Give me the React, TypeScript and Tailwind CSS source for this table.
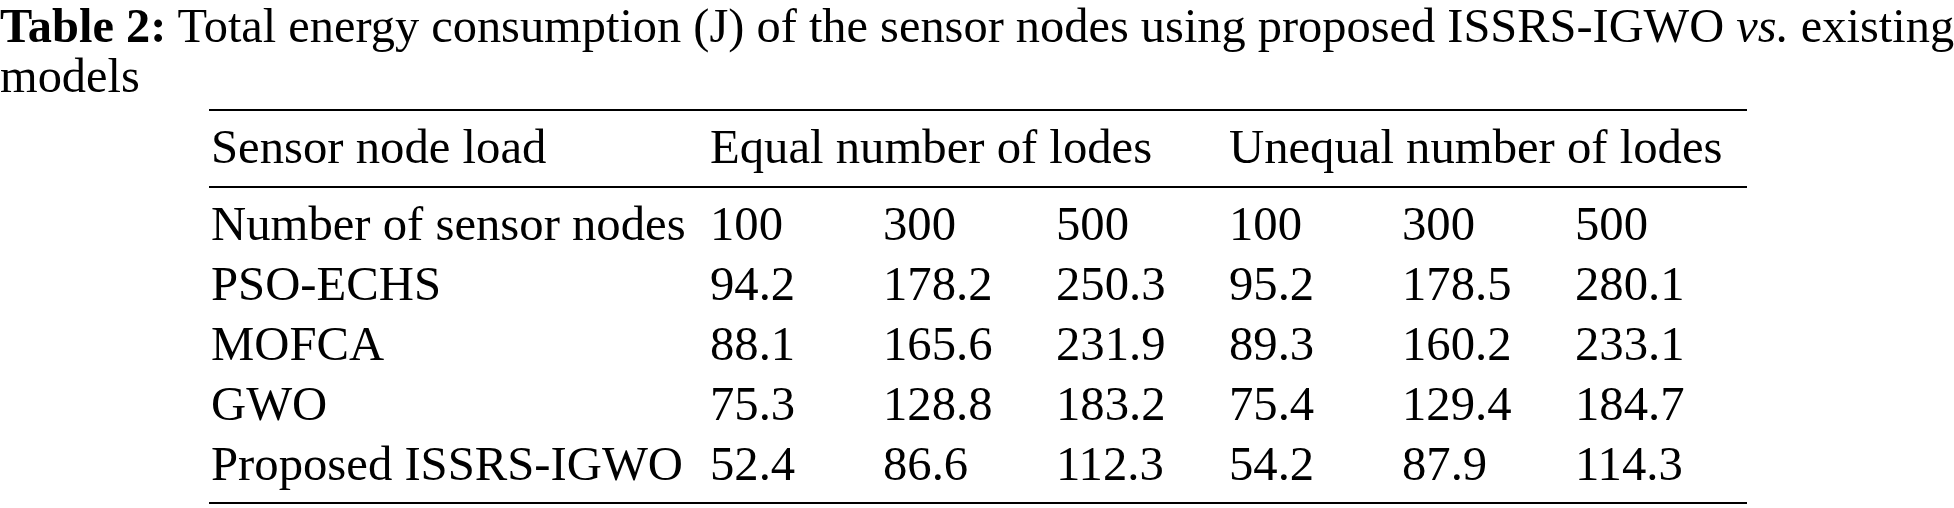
import React from 'react';

const rows: [string, string[]][] = [
  ['Number of sensor nodes', ['100', '300', '500', '100', '300', '500']],
  ['PSO-ECHS', ['94.2', '178.2', '250.3', '95.2', '178.5', '280.1']],
  ['MOFCA', ['88.1', '165.6', '231.9', '89.3', '160.2', '233.1']],
  ['GWO', ['75.3', '128.8', '183.2', '75.4', '129.4', '184.7']],
  ['Proposed ISSRS-IGWO', ['52.4', '86.6', '112.3', '54.2', '87.9', '114.3']],
];

const App = () => {
  return (
    <div className="w-[1954px] h-[508px] bg-white text-black overflow-hidden font-['Liberation_Serif','Times_New_Roman',serif]">
      {/* Caption */}
      <div className="text-[48.4px] leading-[50px] pt-[1px]">
        <p className="whitespace-nowrap">
          <span className="font-bold">Table 2:</span> Total energy consumption (J) of the sensor nodes using proposed ISSRS-IGWO <i>vs.</i> existing
        </p>
        <p>models</p>
      </div>

      {/* Table */}
      <table className="ml-[209px] mt-[8px] table-fixed border-collapse text-[48.7px] leading-[60px]">
        <colgroup>
          <col className="w-[500px]" />
          <col className="w-[173px]" />
          <col className="w-[173px]" />
          <col className="w-[173px]" />
          <col className="w-[173px]" />
          <col className="w-[173px]" />
          <col className="w-[173px]" />
        </colgroup>
        <thead>
          <tr className="border-t-2 border-b-2 border-black">
            <th className="pl-[2px] pt-[6px] pb-[9px] text-left font-normal whitespace-nowrap">Sensor node load</th>
            <th colSpan={3} className="pl-[1px] pt-[6px] pb-[9px] text-left font-normal whitespace-nowrap">Equal number of lodes</th>
            <th colSpan={3} className="pl-[1px] pt-[6px] pb-[9px] text-left font-normal whitespace-nowrap">Unequal number of lodes</th>
          </tr>
        </thead>
        <tbody className="border-b-2 border-black">
          {rows.map(([label, vals], i) => (
            <tr key={label}>
              <td className={`pl-[2px] whitespace-nowrap ${i === 0 ? 'pt-[6px]' : ''} ${i === rows.length - 1 ? 'pb-[8px]' : ''}`}>{label}</td>
              {vals.map((v, j) => (
                <td key={j} className={`pl-[1px] whitespace-nowrap ${i === 0 ? 'pt-[6px]' : ''} ${i === rows.length - 1 ? 'pb-[8px]' : ''}`}>{v}</td>
              ))}
            </tr>
          ))}
        </tbody>
      </table>
    </div>
  );
};

export default App;
